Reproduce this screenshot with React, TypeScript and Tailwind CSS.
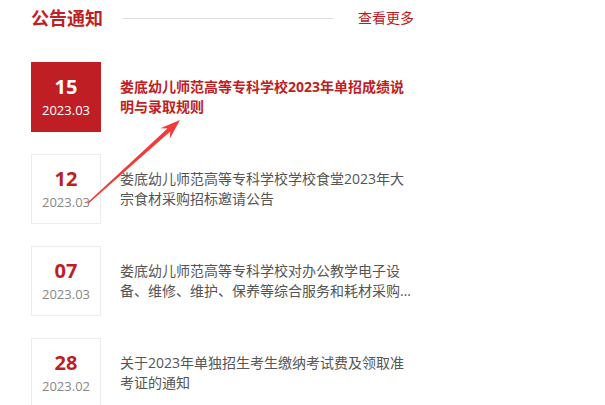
const notices = [
  { day: "15", ym: "2023.03", title: "娄底幼儿师范高等专科学校2023年单招成绩说明与录取规则", active: true },
  { day: "12", ym: "2023.03", title: "娄底幼儿师范高等专科学校学校食堂2023年大宗食材采购招标邀请公告" },
  { day: "07", ym: "2023.03", title: "娄底幼儿师范高等专科学校对办公教学电子设备、维修、维护、保养等综合服务和耗材采购项目询价公告" },
  { day: "28", ym: "2023.02", title: "关于2023年单独招生考生缴纳考试费及领取准考证的通知" },
];

export default function App() {
  return (
    <div
      className="relative w-[605px] h-[405px] overflow-hidden bg-white"
      style={{ fontFamily: '"Open Sans", "Noto Sans CJK SC", sans-serif' }}
    >
      <div className="pl-[31px] pt-[7px] w-[414px]">
        {/* Header */}
        <div className="flex items-center h-[22px]">
          <h2 className="text-[18px] font-bold leading-none text-[#be1e24]">公告通知</h2>
          <div className="flex-1 ml-[20px] mr-[25px] h-px bg-[#dddddd]" />
          <a className="text-[14px] leading-none text-[#c0161f]">查看更多</a>
        </div>

        {/* List */}
        <ul className="mt-[33px] flex flex-col gap-[22px]">
          {notices.map((n) => (
            <li key={n.day + n.ym} className="flex items-center gap-[19px]">
              <div
                className={
                  n.active
                    ? "w-[70px] h-[70px] shrink-0 flex flex-col items-center justify-center bg-[#be1e24] text-white"
                    : "w-[70px] h-[70px] shrink-0 flex flex-col items-center justify-center border border-[#ececec] bg-white"
                }
              >
                <span className={n.active ? "text-[20px] leading-6 font-bold" : "text-[20px] leading-6 font-bold text-[#be1e24]"}>
                  {n.day}
                </span>
                <span className={n.active ? "text-[13px] leading-5 mt-[1px]" : "text-[13px] leading-5 mt-[1px] text-[#888888]"}>
                  {n.ym}
                </span>
              </div>
              <p
                className={
                  n.active
                    ? "w-[293px] text-[14px] leading-5 font-bold text-[#be1e24] line-clamp-2"
                    : "w-[293px] text-[14px] leading-5 text-[#555555] line-clamp-2"
                }
              >
                {n.title}
              </p>
            </li>
          ))}
        </ul>
      </div>

      {/* annotation arrow */}
      <svg className="absolute left-0 top-0 pointer-events-none" width="605" height="405">
        <polygon
          fill="#f23a3a"
          points="88.5,203.5 170.2,131.5 169.9,138.6 180,120 160.5,128.2 167.5,128.6 87.5,202.5"
        />
      </svg>
    </div>
  );
}
